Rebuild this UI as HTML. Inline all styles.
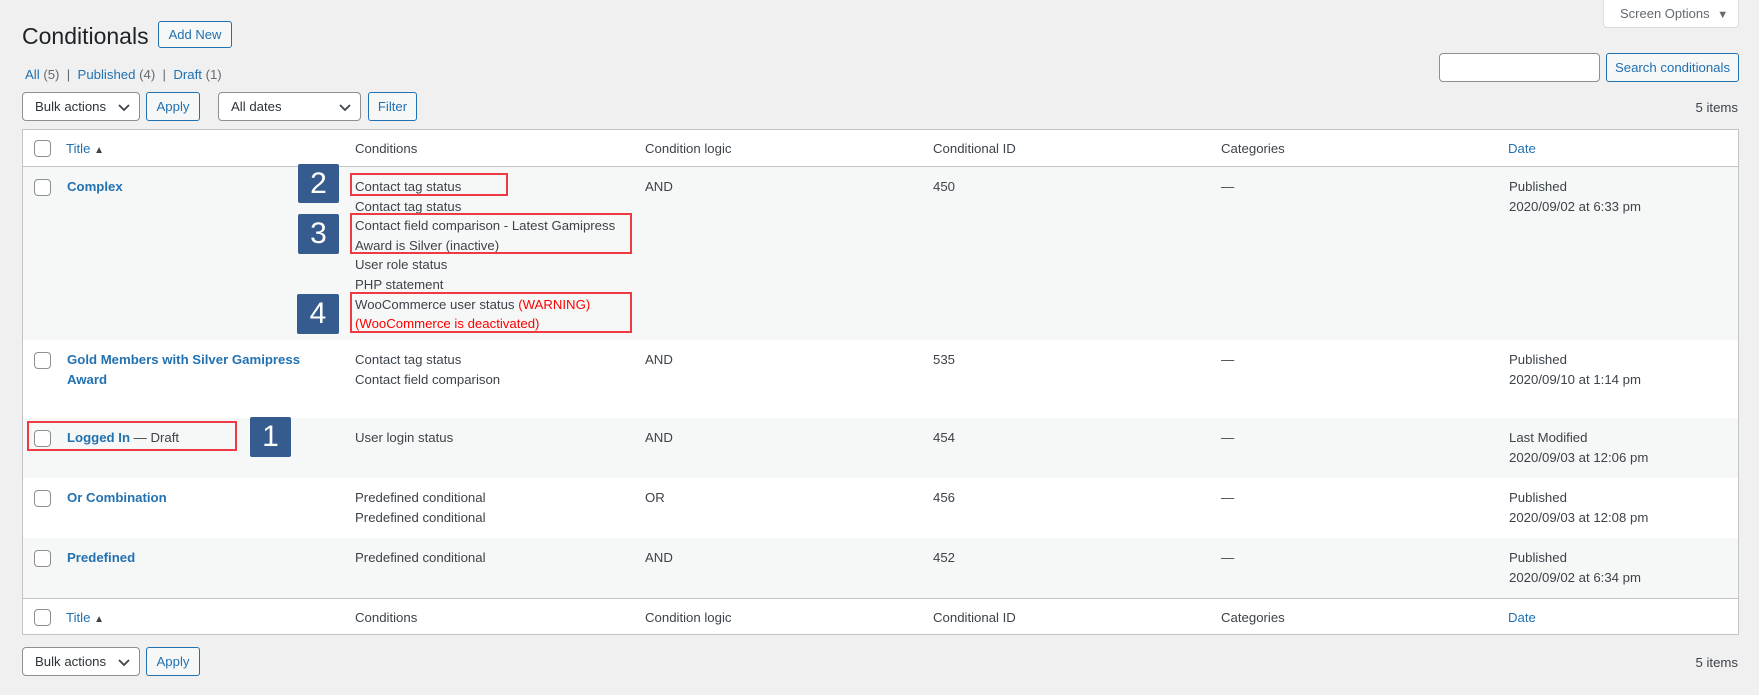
<!DOCTYPE html>
<html><head><meta charset="utf-8"><style>
*{box-sizing:border-box;margin:0;padding:0}
body{width:1759px;height:695px;background:#f0f0f1;font-family:"Liberation Sans",Arial,sans-serif;font-size:13.2px;color:#3c434a;position:relative;overflow:hidden;line-height:19.6px}
.a{position:absolute}
a{color:#2271b1;text-decoration:none}
.btn{position:absolute;border:1px solid #2271b1;border-radius:3px;background:#f6f7f7;color:#2271b1;font-size:13.2px;display:flex;align-items:center;justify-content:center}
.sel{position:absolute;border:1px solid #8c8f94;border-radius:4px;background:#fff;color:#2c3338;padding-left:12px;display:flex;align-items:center}
.sel svg{position:absolute;right:9px;top:11px}
.tbl{position:absolute;left:22px;top:129px;width:1717px;height:506px;border:1px solid #c3c4c7;background:#fff}
.row{position:absolute;left:0;width:1715px}
.cb{position:absolute;left:11px;width:17px;height:17px;border:1px solid #8c8f94;border-radius:4px;background:#fff}
.c{position:absolute}
.t{font-weight:bold;color:#2271b1}
.red{color:#f00}
.box{position:absolute;border:2px solid #ee3a43}
.num{position:absolute;background:#355b8f;color:#fff;font-size:30px;text-align:center;border-radius:2px}
</style></head><body>
<div class="a" style="left:1603px;top:-2px;width:136px;height:30px;border:1px solid #dcdcde;border-radius:0 0 4px 4px;background:#fff;color:#646970;font-size:13px;line-height:30px;padding-left:16px">Screen Options <span style="font-size:11px;margin-left:4px">▼</span></div>
<div class="a" style="left:22px;top:20px;font-size:23px;line-height:32px;color:#1d2327">Conditionals</div>
<div class="btn" style="left:158px;top:21px;width:74px;height:27px;font-size:13px">Add New</div>
<div class="a" style="left:25px;top:65px;font-size:13.2px;color:#646970"><a>All</a> (5) &nbsp;| &nbsp;<a>Published</a> (4) &nbsp;| &nbsp;<a>Draft</a> (1)</div>
<div class="a" style="left:1439px;top:53px;width:161px;height:29px;border:1px solid #8c8f94;border-radius:4px;background:#fff"></div>
<div class="btn" style="left:1606px;top:53px;width:133px;height:29px">Search conditionals</div>
<div class="sel" style="left:22px;top:92px;width:118px;height:29px">Bulk actions<svg width="12" height="8"><path d="M1 1l5 5 5-5" stroke="#3c434a" stroke-width="1.8" fill="none"/></svg></div>
<div class="btn" style="left:146px;top:92px;width:54px;height:29px">Apply</div>
<div class="sel" style="left:218px;top:92px;width:143px;height:29px">All dates<svg width="12" height="8"><path d="M1 1l5 5 5-5" stroke="#3c434a" stroke-width="1.8" fill="none"/></svg></div>
<div class="btn" style="left:368px;top:92px;width:49px;height:29px">Filter</div>
<div class="a" style="left:1660px;top:98px;width:78px;text-align:right">5 items</div>

<div class="tbl">
 <div class="row" style="top:0;height:37px;border-bottom:1px solid #c3c4c7">
  <div class="cb" style="top:10px"></div>
  <div class="c" style="left:43px;top:9px"><a>Title</a> <span style="font-size:10px">▲</span></div>
  <div class="c" style="left:332px;top:9px">Conditions</div>
  <div class="c" style="left:622px;top:9px">Condition logic</div>
  <div class="c" style="left:910px;top:9px">Conditional ID</div>
  <div class="c" style="left:1198px;top:9px">Categories</div>
  <div class="c" style="left:1485px;top:9px"><a>Date</a></div>
 </div>
 <div class="row" style="top:37px;height:173px;background:#f6f7f7">
  <div class="cb" style="top:12px"></div>
  <div class="c t" style="left:44px;top:10px">Complex</div>
  <div class="c" style="left:332px;top:10px">Contact tag status<br>Contact tag status<br>Contact field comparison - Latest Gamipress<br>Award is Silver (inactive)<br>User role status<br>PHP statement<br>WooCommerce user status <span class="red">(WARNING)<br>(WooCommerce is deactivated)</span></div>
  <div class="c" style="left:622px;top:10px">AND</div>
  <div class="c" style="left:910px;top:10px">450</div>
  <div class="c" style="left:1198px;top:10px">—</div>
  <div class="c" style="left:1486px;top:10px">Published<br>2020/09/02 at 6:33 pm</div>
 </div>
 <div class="row" style="top:210px;height:78px;background:#fff">
  <div class="cb" style="top:12px"></div>
  <div class="c t" style="left:44px;top:10px">Gold Members with Silver Gamipress<br>Award</div>
  <div class="c" style="left:332px;top:10px">Contact tag status<br>Contact field comparison</div>
  <div class="c" style="left:622px;top:10px">AND</div>
  <div class="c" style="left:910px;top:10px">535</div>
  <div class="c" style="left:1198px;top:10px">—</div>
  <div class="c" style="left:1486px;top:10px">Published<br>2020/09/10 at 1:14 pm</div>
 </div>
 <div class="row" style="top:288px;height:60px;background:#f6f7f7">
  <div class="cb" style="top:12px"></div>
  <div class="c" style="left:44px;top:10px"><span class="t">Logged In</span> — Draft</div>
  <div class="c" style="left:332px;top:10px">User login status</div>
  <div class="c" style="left:622px;top:10px">AND</div>
  <div class="c" style="left:910px;top:10px">454</div>
  <div class="c" style="left:1198px;top:10px">—</div>
  <div class="c" style="left:1486px;top:10px">Last Modified<br>2020/09/03 at 12:06 pm</div>
 </div>
 <div class="row" style="top:348px;height:60px;background:#fff">
  <div class="cb" style="top:12px"></div>
  <div class="c t" style="left:44px;top:10px">Or Combination</div>
  <div class="c" style="left:332px;top:10px">Predefined conditional<br>Predefined conditional</div>
  <div class="c" style="left:622px;top:10px">OR</div>
  <div class="c" style="left:910px;top:10px">456</div>
  <div class="c" style="left:1198px;top:10px">—</div>
  <div class="c" style="left:1486px;top:10px">Published<br>2020/09/03 at 12:08 pm</div>
 </div>
 <div class="row" style="top:408px;height:60px;background:#f6f7f7">
  <div class="cb" style="top:12px"></div>
  <div class="c t" style="left:44px;top:10px">Predefined</div>
  <div class="c" style="left:332px;top:10px">Predefined conditional</div>
  <div class="c" style="left:622px;top:10px">AND</div>
  <div class="c" style="left:910px;top:10px">452</div>
  <div class="c" style="left:1198px;top:10px">—</div>
  <div class="c" style="left:1486px;top:10px">Published<br>2020/09/02 at 6:34 pm</div>
 </div>
 <div class="row" style="top:468px;height:37px;border-top:1px solid #c3c4c7">
  <div class="cb" style="top:10px"></div>
  <div class="c" style="left:43px;top:9px"><a>Title</a> <span style="font-size:10px">▲</span></div>
  <div class="c" style="left:332px;top:9px">Conditions</div>
  <div class="c" style="left:622px;top:9px">Condition logic</div>
  <div class="c" style="left:910px;top:9px">Conditional ID</div>
  <div class="c" style="left:1198px;top:9px">Categories</div>
  <div class="c" style="left:1485px;top:9px"><a>Date</a></div>
 </div>
</div>

<div class="sel" style="left:22px;top:647px;width:118px;height:29px">Bulk actions<svg width="12" height="8"><path d="M1 1l5 5 5-5" stroke="#3c434a" stroke-width="1.8" fill="none"/></svg></div>
<div class="btn" style="left:146px;top:647px;width:54px;height:29px">Apply</div>
<div class="a" style="left:1660px;top:653px;width:78px;text-align:right">5 items</div>

<div class="box" style="left:350px;top:173px;width:158px;height:23px"></div>
<div class="box" style="left:350px;top:213px;width:282px;height:41px"></div>
<div class="box" style="left:350px;top:292px;width:282px;height:41px"></div>
<div class="box" style="left:27px;top:421px;width:210px;height:30px"></div>
<div class="num" style="left:298px;top:164px;width:41px;height:39px;line-height:39px">2</div>
<div class="num" style="left:298px;top:214px;width:41px;height:40px;line-height:40px">3</div>
<div class="num" style="left:297px;top:294px;width:42px;height:40px;line-height:40px">4</div>
<div class="num" style="left:250px;top:417px;width:41px;height:40px;line-height:40px">1</div>
</body></html>
